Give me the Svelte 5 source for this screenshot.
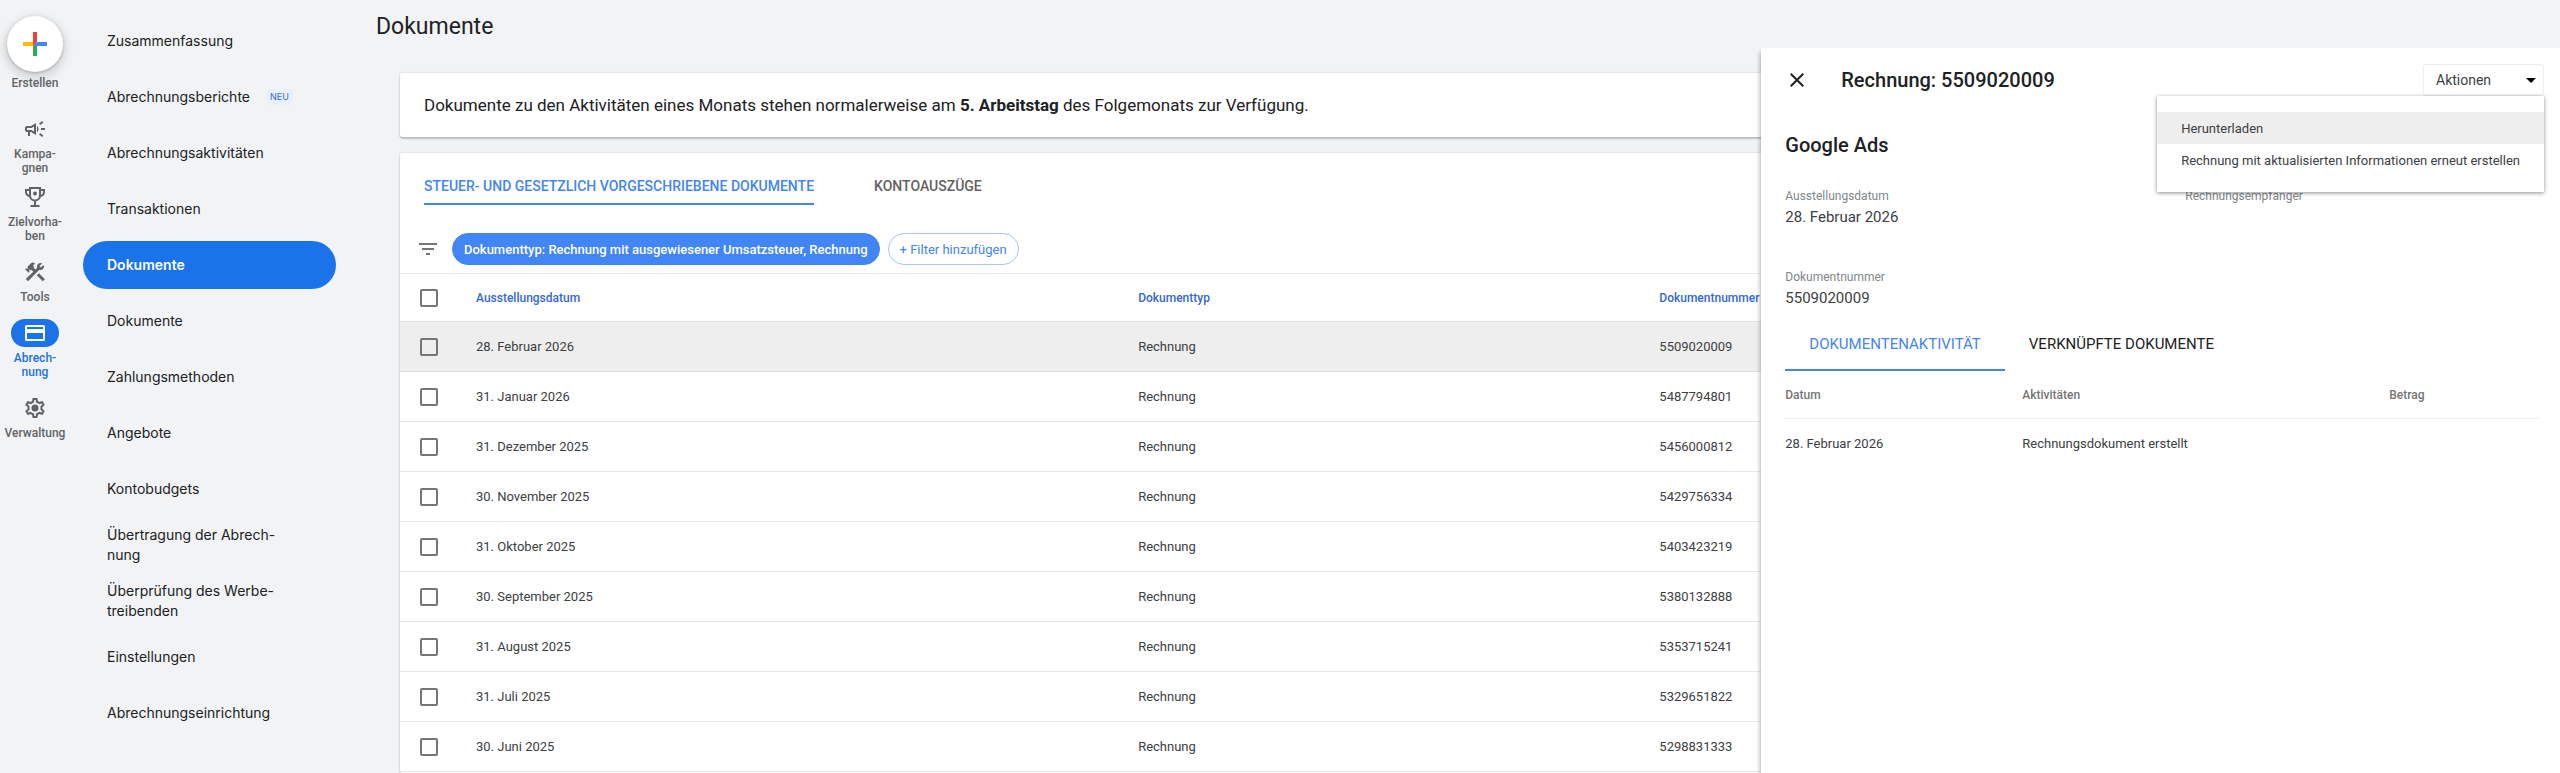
<script lang="ts">
  type RailItem = {
    icon: string;
    lines: string[];
    active?: boolean;
  }

  type NavItem = {
    lines: string[];
    badge?: string;
    active?: boolean;
  }

  type DocumentRow = {
    date: string;
    number: string;
  }

  const railItems: RailItem[] = [
    { icon: 'campaign', lines: ['Kampa-', 'gnen'] },
    { icon: 'trophy', lines: ['Zielvorha-', 'ben'] },
    { icon: 'tools', lines: ['Tools'] },
    { icon: 'billing', lines: ['Abrech-', 'nung'], active: true },
    { icon: 'settings', lines: ['Verwaltung'] }
  ];

  const navItems: NavItem[] = [
    { lines: ['Zusammenfassung'] },
    { lines: ['Abrechnungsberichte'], badge: 'NEU' },
    { lines: ['Abrechnungsaktivitäten'] },
    { lines: ['Transaktionen'] },
    { lines: ['Dokumente'], active: true },
    { lines: ['Dokumente'] },
    { lines: ['Zahlungsmethoden'] },
    { lines: ['Angebote'] },
    { lines: ['Kontobudgets'] },
    { lines: ['Übertragung der Abrech-', 'nung'] },
    { lines: ['Überprüfung des Werbe-', 'treibenden'] },
    { lines: ['Einstellungen'] },
    { lines: ['Abrechnungseinrichtung'] }
  ];

  const rows: DocumentRow[] = [
    { date: '28. Februar 2026', number: '5509020009' },
    { date: '31. Januar 2026', number: '5487794801' },
    { date: '31. Dezember 2025', number: '5456000812' },
    { date: '30. November 2025', number: '5429756334' },
    { date: '31. Oktober 2025', number: '5403423219' },
    { date: '30. September 2025', number: '5380132888' },
    { date: '31. August 2025', number: '5353715241' },
    { date: '31. Juli 2025', number: '5329651822' },
    { date: '30. Juni 2025', number: '5298831333' }
  ];

  const actions = [
    'Herunterladen',
    'Rechnung mit aktualisierten Informationen erneut erstellen'
  ];

  let selected = $state('5509020009');
  let panelOpen = $state(true);
  let menuOpen = $state(true);
</script>

{#snippet icon(name: string)}
  <svg class="icon" viewBox="0 0 24 24" aria-hidden="true">
    {#if name === 'campaign'}
      <path d="M18 11v2h4v-2h-4zM16 17.61c.96.71 2.21 1.65 3.2 2.39.4-.53.8-1.07 1.2-1.6-.99-.74-2.24-1.68-3.2-2.4-.4.54-.8 1.08-1.2 1.61zM20.4 5.6c-.4-.53-.8-1.07-1.2-1.6-.99.74-2.24 1.68-3.2 2.4.4.53.8 1.07 1.2 1.6.96-.72 2.21-1.65 3.2-2.4zM4 9c-1.1 0-2 .9-2 2v2c0 1.1.9 2 2 2h1v4h2v-4h1l5 3V6L8 9H4zm5.03 1.71L11 9.53v4.94l-1.97-1.18-.48-.29H4v-2h4.55l.48-.29zM15.5 12c0-1.33-.58-2.53-1.5-3.35v6.69c.92-.81 1.5-2.01 1.5-3.34z" />
    {:else if name === 'trophy'}
      <path fill="none" stroke="currentColor" stroke-width="2" d="M7 3h10v7.500a5 5 0 0 1-10 0zM7 5H3v2a4 4 0 0 0 4.200 4M17 5h4v2a4 4 0 0 1-4.200 4M12 15.500V21M7.500 21h9" />
      <circle cx="12" cy="8.500" r="2" />
    {:else if name === 'tools'}
      <path d="M13.78 15.3l6 6 2.11-2.16-6-6zM17.5 10c1.93 0 3.5-1.57 3.5-3.5 0-.58-.16-1.12-.41-1.6l-2.7 2.7-1.49-1.49 2.7-2.7c-.48-.25-1.02-.41-1.6-.41C15.57 3 14 4.57 14 6.5c0 .41.08.8.21 1.16l-1.85 1.85-1.78-1.78.71-.71-1.41-1.41L12 3.49c-1.17-1.17-3.07-1.17-4.24 0L4.22 7.03l1.41 1.41H2.81l-.71.71 3.54 3.54.71-.71V9.15l1.41 1.41.71-.71 1.78 1.78-7.41 7.41 2.12 2.12L16.34 9.79c.36.13.75.21 1.16.21z" />
    {:else if name === 'billing'}
      <path fill-rule="evenodd" d="M3.500 4h17A1.500 1.500 0 0 1 22 5.500v13a1.500 1.500 0 0 1-1.500 1.500h-17A1.500 1.500 0 0 1 2 18.500v-13A1.500 1.500 0 0 1 3.500 4zM4 6v2h16V6zM4 12v6h16v-6z" />
    {:else if name === 'settings'}
      <path d="M19.43 12.98c.04-.32.07-.64.07-.98 0-.34-.03-.66-.07-.98l2.11-1.65c.19-.15.24-.42.12-.64l-2-3.46c-.09-.16-.26-.25-.44-.25-.06 0-.12.01-.17.03l-2.49 1c-.52-.4-1.08-.73-1.69-.98l-.38-2.65C14.46 2.18 14.25 2 14 2h-4c-.25 0-.46.18-.49.42l-.38 2.65c-.61.25-1.17.59-1.69.98l-2.49-1c-.06-.02-.12-.03-.18-.03-.17 0-.34.09-.43.25l-2 3.46c-.13.22-.07.49.12.64l2.11 1.65c-.04.32-.07.65-.07.98 0 .33.03.66.07.98l-2.11 1.65c-.19.15-.24.42-.12.64l2 3.46c.09.16.26.25.44.25.06 0 .12-.01.17-.03l2.49-1c.52.4 1.08.73 1.69.98l.38 2.65c.03.24.24.42.49.42h4c.25 0 .46-.18.49-.42l.38-2.65c.61-.25 1.17-.59 1.69-.98l2.49 1c.06.02.12.03.18.03.17 0 .34-.09.43-.25l2-3.46c.12-.22.07-.49-.12-.64l-2.11-1.65zm-1.98-1.71c.04.31.05.52.05.73 0 .21-.02.43-.05.73l-.14 1.13.89.7 1.08.84-.7 1.21-1.27-.51-1.04-.42-.9.68c-.43.32-.84.56-1.25.73l-1.06.43-.16 1.13-.2 1.35h-1.4l-.19-1.35-.16-1.13-1.06-.43c-.43-.18-.83-.41-1.23-.71l-.91-.7-1.06.43-1.27.51-.7-1.21 1.08-.84.89-.7-.14-1.13c-.03-.31-.05-.54-.05-.74s.02-.43.05-.73l.14-1.13-.89-.7-1.08-.84.7-1.21 1.27.51 1.04.42.9-.68c.43-.32.84-.56 1.25-.73l1.06-.43.16-1.13.2-1.35h1.39l.19 1.35.16 1.13 1.06.43c.43.18.83.41 1.23.71l.91.7 1.06-.43 1.27-.51.7 1.21-1.07.85-.89.7.14 1.13z" />
      <circle cx="12" cy="12" r="3.500" />
    {:else if name === 'filter'}
      <path d="M10 18h4v-2h-4v2zM3 6v2h18V6H3zm3 7h12v-2H6v2z" />
    {:else if name === 'close'}
      <path d="M19 6.410L17.590 5 12 10.590 6.410 5 5 6.410 10.590 12 5 17.590 6.410 19 12 13.410 17.590 19 19 17.590 13.410 12z" />
    {:else if name === 'arrow'}
      <path d="M7 10l5 5 5-5z" />
    {/if}
  </svg>
{/snippet}

{#snippet textLines(lines: string[])}
  {#each lines as line, i}
    {#if i > 0}<br />{/if}{line}
  {/each}
{/snippet}

<div class="app">
  <nav class="rail" aria-label="Hauptmenü">
    <button class="create">
      <span class="create__circle">
        <svg class="create__plus" viewBox="0 0 24 24" aria-hidden="true">
          <path fill="#fbbc04" d="M0 10h10v4H0z" />
          <path fill="#4285f4" d="M14 10h10v4H10z" />
          <path fill="#34a853" d="M10 14h4v10h-4z" />
          <path fill="#ea4335" d="M10 0h4v10l-4 4z" />
        </svg>
      </span>
      Erstellen
    </button>

    {#each railItems as item}
      <a class="rail__item" class:rail__item--active={item.active} href="#{item.icon}">
        <span class="rail__icon">{@render icon(item.icon)}</span>
        <span>{@render textLines(item.lines)}</span>
      </a>
    {/each}
  </nav>

  <nav class="nav" aria-label="Abrechnung">
    {#each navItems as item}
      <a class="nav__item" class:nav__item--active={item.active} href="#abrechnung">
        <span>{@render textLines(item.lines)}</span>
        {#if item.badge}
          <span class="badge">{item.badge}</span>
        {/if}
      </a>
    {/each}
  </nav>

  <main class="main">
    <h1 class="main__title">Dokumente</h1>

    <div class="cards">
      <p class="card notice">
        Dokumente zu den Aktivitäten eines Monats stehen normalerweise am <b>5. Arbeitstag</b> des Folgemonats zur Verfügung.
      </p>

      <section class="card documents">
        <div class="tabs">
          <button class="tab tab--active">STEUER- UND GESETZLICH VORGESCHRIEBENE DOKUMENTE</button>
          <button class="tab">KONTOAUSZÜGE</button>
        </div>

        <div class="filters">
          {@render icon('filter')}
          <button class="chip chip--filled">Dokumenttyp: Rechnung mit ausgewiesener Umsatzsteuer, Rechnung</button>
          <button class="chip">+ Filter hinzufügen</button>
        </div>

        <table class="table">
          <thead>
            <tr>
              <th class="table__check"><input type="checkbox" aria-label="Alle auswählen" /></th>
              <th class="table__date">Ausstellungsdatum</th>
              <th class="table__type">Dokumenttyp</th>
              <th>Dokumentnummer</th>
            </tr>
          </thead>
          <tbody>
            {#each rows as row}
              <tr class:selected={row.number === selected} onclick={() => (selected = row.number)}>
                <td><input type="checkbox" aria-label={row.date} /></td>
                <td>{row.date}</td>
                <td>Rechnung</td>
                <td>{row.number}</td>
              </tr>
            {/each}
          </tbody>
        </table>
      </section>
    </div>
  </main>

  {#if panelOpen}
    <aside class="panel">
      <header class="panel__header">
        <button class="close" aria-label="Schließen" onclick={() => (panelOpen = false)}>
          {@render icon('close')}
        </button>
        <h2 class="panel__title">Rechnung: {selected}</h2>

        <div class="actions">
          <button class="actions__button" aria-expanded={menuOpen} onclick={() => (menuOpen = !menuOpen)}>
            Aktionen
            {@render icon('arrow')}
          </button>
          {#if menuOpen}
            <div class="menu" role="menu">
              {#each actions as action, i}
                <button class="menu__item" class:menu__item--focus={i === 0} role="menuitem">{action}</button>
              {/each}
            </div>
          {/if}
        </div>
      </header>

      <h2 class="panel__title panel__product">Google Ads</h2>

      <dl class="details">
        <div>
          <dt>Ausstellungsdatum</dt>
          <dd>28. Februar 2026</dd>
        </div>
        <div>
          <dt>Rechnungsempfänger</dt>
        </div>
        <div>
          <dt>Dokumentnummer</dt>
          <dd>{selected}</dd>
        </div>
      </dl>

      <div class="panel__tabs">
        <button class="panel__tab panel__tab--active">DOKUMENTENAKTIVITÄT</button>
        <button class="panel__tab">VERKNÜPFTE DOKUMENTE</button>
      </div>

      <table class="activity">
        <thead>
          <tr>
            <th class="activity__date">Datum</th>
            <th class="activity__text">Aktivitäten</th>
            <th>Betrag</th>
          </tr>
        </thead>
        <tbody>
          <tr>
            <td>28. Februar 2026</td>
            <td>Rechnungsdokument erstellt</td>
            <td></td>
          </tr>
        </tbody>
      </table>
    </aside>
  {/if}
</div>

<style>
  :global(body) {
    margin: 0;
    background: #f1f3f4;
  }

  .app {
    display: flex;
    position: relative;
    height: 100vh;
    overflow: hidden;
    font-family: Roboto, "Liberation Sans", sans-serif;
    font-size: 13px;
    color: #3c4043;
  }

  .app * {
    box-sizing: border-box;
  }

  button {
    margin: 0;
    padding: 0;
    border: 0;
    background: none;
    font: inherit;
    color: inherit;
    cursor: pointer;
  }

  a {
    color: inherit;
    text-decoration: none;
  }

  .icon {
    display: block;
    flex: none;
    width: 24px;
    height: 24px;
    fill: currentColor;
  }

  /* --- RAIL --- */
  .rail {
    display: flex;
    flex-direction: column;
    align-items: center;
    flex: none;
    width: 70px;
    padding-top: 16px;
    font-size: 12px;
    line-height: 14px;
    font-weight: 500;
    text-align: center;
    color: #5f6368;
  }

  .create {
    display: flex;
    flex-direction: column;
    align-items: center;
    gap: 4px;
    margin-bottom: 25px;
  }

  .create__circle {
    display: grid;
    place-items: center;
    width: 56px;
    height: 56px;
    border-radius: 50%;
    background: #fff;
    box-shadow: 0 1px 3px rgba(60, 64, 67, 0.3), 0 4px 8px 3px rgba(60, 64, 67, 0.15);
  }

  .create__plus {
    width: 24px;
    height: 24px;
  }

  .rail__item {
    display: flex;
    flex-direction: column;
    align-items: center;
    gap: 4px;
    margin-bottom: 15px;
  }

  .create + .rail__item {
    margin-bottom: 8px;
  }

  .rail__icon {
    display: grid;
    place-items: center;
    width: 48px;
    height: 28px;
    border-radius: 14px;
  }

  .rail__item--active {
    color: #1a73e8;
  }

  .rail__item--active .rail__icon {
    background: #1a73e8;
    color: #fff;
  }

  /* --- NAV --- */
  .nav {
    display: flex;
    flex-direction: column;
    gap: 8px;
    flex: none;
    width: 279px;
    padding: 17px 13px 16px;
    font-family: Inter, Roboto, sans-serif;
    font-size: 14px;
    line-height: 20px;
    color: #202124;
  }

  .nav__item {
    display: flex;
    align-items: center;
    gap: 16px;
    flex: none;
    height: 48px;
    padding: 0 24px;
    border-radius: 24px;
  }

  .nav__item--active {
    background: #1a73e8;
    color: #fff;
    font-weight: 600;
  }

  .badge {
    padding: 0 4px;
    border-radius: 2px;
    background: #e8f0fe;
    font-size: 9px;
    line-height: 16px;
    color: #3367d6;
  }

  /* --- MAIN --- */
  .main {
    display: flex;
    flex-direction: column;
    flex: 1;
    min-width: 0;
    padding-left: 27px;
  }

  .main__title {
    margin: 0;
    padding: 11px 0 30px;
    font-size: 23px;
    line-height: 32px;
    font-weight: 400;
    color: #202124;
  }

  .cards {
    display: flex;
    flex-direction: column;
    gap: 16px;
    flex: 1;
    padding: 0 24px;
  }

  .card {
    margin: 0;
    border-radius: 2px;
    background: #fff;
    box-shadow: 0 0 2px rgba(0, 0, 0, 0.2), 0 2px 2px rgba(0, 0, 0, 0.2);
  }

  .notice {
    padding: 20px 24px;
    font-size: 17px;
    line-height: 24px;
    color: #202124;
  }

  .documents {
    flex: 1;
  }

  .tabs {
    display: flex;
    gap: 60px;
    padding: 16px 24px 28px;
  }

  .tab {
    height: 36px;
    border-bottom: 2px solid transparent;
    font-size: 14px;
    font-weight: 500;
    color: #616161;
  }

  .tab--active {
    border-color: #4285f4;
    color: #4285f4;
  }

  .filters {
    display: flex;
    align-items: center;
    gap: 8px;
    padding: 0 16px 8px;
    color: #757575;
  }

  .filters .icon {
    margin-right: 4px;
  }

  .chip {
    height: 32px;
    padding: 0 11px;
    border: 1px solid #a8c4fa;
    border-radius: 16px;
    font-size: 13px;
    color: #4285f4;
  }

  .chip--filled {
    border-color: #4285f4;
    background: #4285f4;
    color: #fff;
    font-weight: 500;
  }

  .table,
  .activity {
    width: 100%;
    border-collapse: separate;
    border-spacing: 0;
    table-layout: fixed;
    text-align: left;
  }

  .table th {
    height: 49px;
    padding: 0;
    border-top: 1px solid #e8e8e8;
    border-bottom: 1px solid #e0e0e0;
    font-size: 12px;
    font-weight: 500;
    color: #3367d6;
  }

  .table td {
    height: 50px;
    padding: 0;
    border-bottom: 1px solid #e8e8e8;
  }

  .table th:first-child,
  .table td:first-child {
    padding-left: 20px;
  }

  .table__check {
    width: 76px;
  }

  .table__date {
    width: 31%;
  }

  .table__type {
    width: 24.4%;
  }

  .selected td {
    background: #eee;
    border-color: #ddd;
  }

  input[type="checkbox"] {
    display: block;
    appearance: none;
    width: 18px;
    height: 18px;
    margin: 0;
    border: 2px solid #757575;
    border-radius: 2px;
  }

  input[type="checkbox"]:checked {
    border-color: #4285f4;
    background: #4285f4;
  }

  /* --- PANEL --- */
  .panel {
    position: absolute;
    top: 48px;
    right: 0;
    bottom: 0;
    width: 31.2%;
    padding: 0 20px 0 24px;
    background: #fff;
    box-shadow: -1px 4px 4px rgba(0, 0, 0, 0.3);
  }

  .panel__header {
    display: flex;
    align-items: center;
    height: 64px;
    margin-right: -4px;
  }

  .close {
    margin-right: 32px;
    color: #202124;
  }

  .panel__title {
    margin: 0;
    font-size: 20px;
    line-height: 28px;
    font-weight: 500;
    color: #202124;
  }

  .panel__product {
    padding: 19px 0 28px;
  }

  .actions {
    position: relative;
    margin-left: auto;
  }

  .actions__button {
    display: flex;
    align-items: center;
    justify-content: space-between;
    width: 121px;
    height: 32px;
    padding: 0 0 0 12px;
    border: 1px solid #eee;
    border-radius: 3px;
    font-size: 14px;
  }

  .actions__button .icon {
    color: #000;
  }

  .menu {
    position: absolute;
    top: 100%;
    right: 0;
    z-index: 1;
    padding: 16px 0;
    background: #fff;
    box-shadow: 0 1px 4px rgba(0, 0, 0, 0.45);
  }

  .menu__item {
    display: block;
    width: 100%;
    height: 32px;
    padding: 0 24px;
    text-align: left;
    white-space: nowrap;
  }

  .menu__item--focus {
    background: #eee;
  }

  .details {
    display: grid;
    grid-template-columns: 400px 1fr;
    row-gap: 39px;
    margin: 0;
  }

  .details dt {
    font-size: 12px;
    line-height: 18px;
    color: #80868b;
  }

  .details dd {
    margin: 0;
    font-size: 15px;
    line-height: 24px;
  }

  .panel__tabs {
    display: flex;
    padding: 8px 0 0;
  }

  .panel__tab {
    height: 53px;
    padding: 0 24px;
    border-bottom: 2px solid transparent;
    font-size: 15px;
    color: #202124;
  }

  .panel__tab--active {
    border-color: #4285f4;
    color: #4285f4;
  }

  .activity th {
    height: 48px;
    padding: 0;
    border-bottom: 1px solid #eee;
    font-size: 12px;
    font-weight: 500;
    color: #757575;
  }

  .activity td {
    height: 48px;
    padding: 0;
  }

  .activity__date {
    width: 237px;
  }

  .activity__text {
    width: 367px;
  }
</style>
